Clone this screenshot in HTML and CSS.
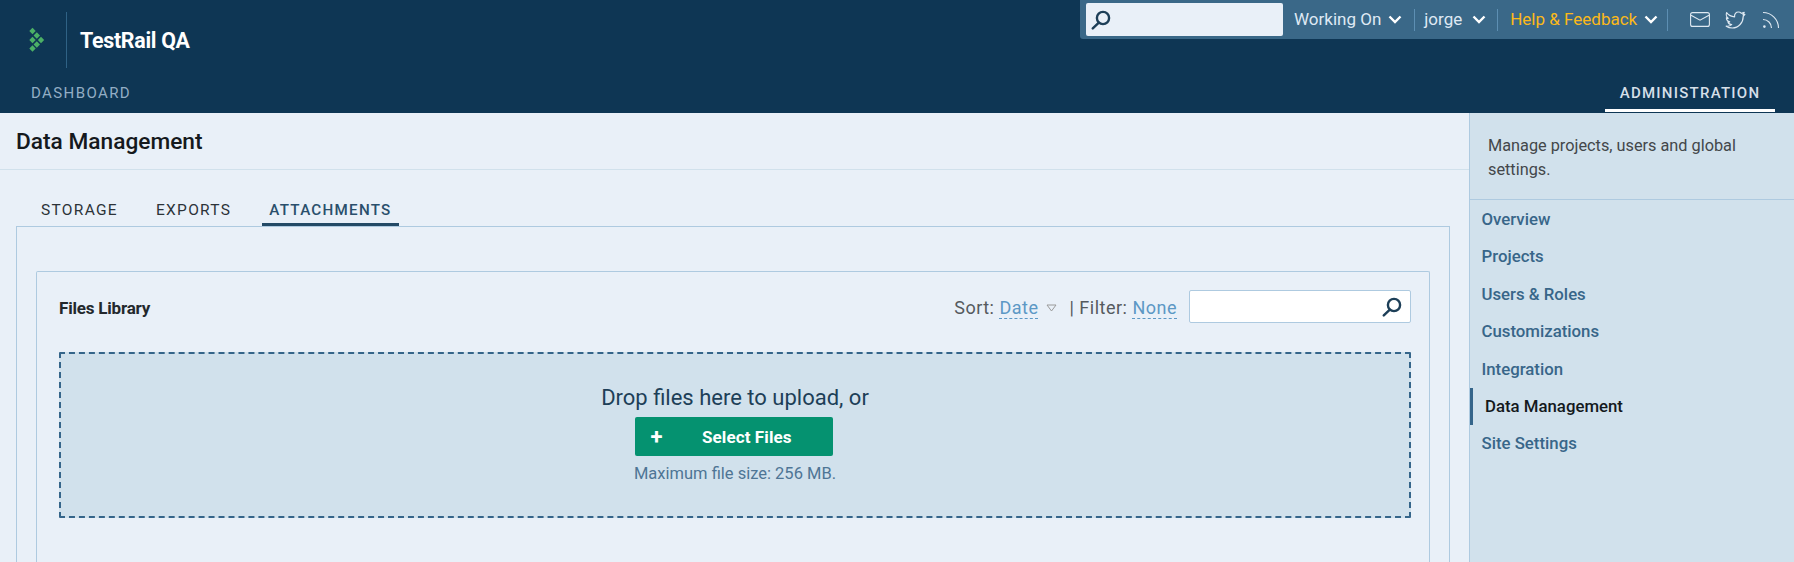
FILE: index.html
```html
<!DOCTYPE html>
<html lang="en">
<head>
<meta charset="utf-8">
<title>Data Management - TestRail QA</title>
<link rel="stylesheet" href="styles.css">
</head>
<body>
<header class="header">
  <div class="header-top">
    <div class="brand">
      <svg class="logo" width="17" height="26" viewBox="0 0 17 26">
        <g fill="#4cb066">
          <path d="M4.500 .8l3.200 3.200-3.200 3.200-3.200-3.200z"/>
          <path d="M8.800 5.300l3.200 3.200-3.200 3.200-3.200-3.200z"/>
          <path d="M4.500 9.800l3.200 3.200-3.200 3.200-3.200-3.200z"/>
          <path d="M13 9.800l3.200 3.200-3.200 3.200-3.200-3.200z"/>
          <path d="M8.800 14.300l3.200 3.200-3.200 3.200-3.200-3.200z"/>
          <path d="M4.500 18.300l3.200 3.200-3.200 3.200-3.200-3.200z"/>
        </g>
      </svg>
      <div class="brand-sep"></div>
      <div class="brand-name">TestRail QA</div>
    </div>
    <div class="topbar">
      <div class="top-search">
        <svg width="20" height="20" viewBox="0 0 20 20" fill="none" stroke="#1d3f58" stroke-width="2.4"><circle cx="12" cy="8" r="6.1"/><path d="M7.8 12.600L1.800 18.400" stroke-linecap="round"/></svg>
      </div>
      <div class="top-item working">Working On <svg class="chev" width="14" height="9" viewBox="0 0 14 9" fill="none" stroke="#fff" stroke-width="2.4"><path d="M1.5 1.5L7 7l5.5-5.5"/></svg></div>
      <div class="top-sep"></div>
      <div class="top-item user">jorge <svg class="chev" width="14" height="9" viewBox="0 0 14 9" fill="none" stroke="#fff" stroke-width="2.4"><path d="M1.5 1.5L7 7l5.5-5.5"/></svg></div>
      <div class="top-sep"></div>
      <div class="top-item help">Help &amp; Feedback <svg class="chev" width="14" height="9" viewBox="0 0 14 9" fill="none" stroke="#fff" stroke-width="2.4"><path d="M1.5 1.5L7 7l5.5-5.5"/></svg></div>
      <div class="top-sep"></div>
      <div class="top-icons">
        <svg class="ic-mail" width="20" height="15" viewBox="0 0 20 15" fill="none" stroke="#dfe9f2" stroke-width="1.1"><rect x=".6" y=".6" width="18.8" height="13.8" rx="2"/><path d="M1 3.2l9 5 9-5"/></svg>
        <svg class="ic-tw" width="21" height="18" viewBox="0 0 21 18" fill="none" stroke="#dfe9f2" stroke-width="1.2" stroke-linejoin="round"><path d="M1.6 1.6c2 2.6 4.700 4 8 4.200C9.200 2.800 11 1 13.400 1c1.300 0 2.300.6 3 1.300l2.800-.9-1.300 2.400 2-.4-1.700 2c0 6.200-4.600 11.600-10.800 11.600-2.300 0-4.400-.6-6.200-1.800 2 .2 4-.4 5.500-1.600-1.800 0-3.300-1.200-3.800-2.800h1.800C2.800 10.300 1.400 8.700 1.400 6.800c.5.300 1.100.5 1.800.5C1.500 6.200.9 3.500 1.600 1.600z"/></svg>
        <svg class="ic-rss" width="18" height="18" viewBox="0 0 18 18" fill="none" stroke="#dfe9f2" stroke-width="1.1"><circle cx="2.400" cy="15.600" r="1.300" fill="#dfe9f2" stroke="none"/><path d="M1 8.500c4.700 0 8.500 3.800 8.500 8.500"/><path d="M1 1.500c8.600 0 15.500 6.900 15.500 15.500"/></svg>
      </div>
    </div>
  </div>
  <nav class="main-nav">
    <a class="nav-link">DASHBOARD</a>
    <a class="nav-link active">ADMINISTRATION</a>
  </nav>
</header>
<div class="page">
  <main class="content">
    <h1 class="title">Data Management</h1>
    <div class="tabs">
      <a class="tab">STORAGE</a>
      <a class="tab">EXPORTS</a>
      <a class="tab current">ATTACHMENTS</a>
    </div>
    <section class="tab-box">
      <div class="card">
        <div class="card-head">
          <div class="card-title">Files Library</div>
          <div class="controls">
            <span class="ctl">Sort: <a class="dotted">Date</a></span>
            <svg class="tri" width="11" height="8" viewBox="0 0 11 8" fill="none" stroke="#9a9a9a"><path d="M1 1h9L5.500 7z"/></svg>
            <span class="ctl bar">| Filter: <a class="dotted">None</a></span>
            <div class="lib-search">
              <svg width="20" height="20" viewBox="0 0 20 20" fill="none" stroke="#1d3f58" stroke-width="2.400"><circle cx="12" cy="8" r="6.100"/><path d="M7.800 12.600L1.800 18.400" stroke-linecap="round"/></svg>
            </div>
          </div>
        </div>
        <div class="dropzone">
          <div class="drop-text">Drop files here to upload, or</div>
          <button class="select-btn"><span class="plus">+</span><span class="select-label">Select Files</span></button>
          <div class="max-size">Maximum file size: 256 MB.</div>
        </div>
      </div>
    </section>
  </main>
  <aside class="sidebar">
    <p class="side-intro">Manage projects, users and global settings.</p>
    <ul class="side-list">
      <li class="side-item">Overview</li>
      <li class="side-item">Projects</li>
      <li class="side-item">Users &amp; Roles</li>
      <li class="side-item">Customizations</li>
      <li class="side-item">Integration</li>
      <li class="side-item selected">Data Management</li>
      <li class="side-item">Site Settings</li>
    </ul>
  </aside>
</div>
</body>
</html>
```

FILE: styles.css
```css
* { box-sizing: border-box; }
html, body { margin: 0; height: 100%; }
body {
  font-family: Roboto, "Liberation Sans", sans-serif;
  background: #e9f0f8;
  overflow: hidden;
  display: flex;
  flex-direction: column;
}
.header { background: #0e3654; height: 113px; flex: none; display: flex; flex-direction: column; }
.header-top { display: flex; justify-content: space-between; align-items: flex-start; height: 79px; }
.brand { display: flex; align-items: center; padding: 12px 0 0 28px; }
.logo { display: block; margin-right: 21px; }
.brand-sep { width: 1px; height: 56px; background: #2f6285; }
.brand-name { margin-left: 13px; color: #fff; font-size: 21.4px; font-weight: 700; letter-spacing: -0.3px; }
.topbar {
  display: flex; align-items: center; width: 714px; height: 39px; padding: 0 0 0 6px;
  background: #3a6888; border-bottom-left-radius: 3px; color: #dfe9f4; font-size: 17px;
}
.top-search { width: 197px; height: 33px; background: #e9f0f8; border-radius: 2px; padding: 7px 0 0 5px; flex: none; }
.top-search svg { display: block; }
.top-item { display: flex; align-items: center; white-space: nowrap; padding-bottom: 1px; }
.chev { margin-left: 7px; }
.working { margin: 0 12px 0 11px; }
.user { margin: 0 11px 0 9px; }
.user .chev { margin-left: 10px; }
.help { margin: 0 9px 0 12px; color: #fbb919; }
.top-sep { width: 1px; height: 22px; background: #5d8fb3; flex: none; }
.top-icons { display: flex; align-items: center; margin-left: 22px; }
.top-icons svg { display: block; }
.ic-tw { margin-left: 15px; }
.ic-rss { margin-left: 16px; }
.main-nav { display: flex; justify-content: space-between; flex: 1; }
.nav-link { font-size: 15px; letter-spacing: 1.4px; color: #93aec5; padding: 5px 0 0 31px; }
.nav-link.active {
  color: #d5dfe8; font-weight: 500; width: 170px; margin-right: 19px; padding: 5px 0 0; text-align: center;
  border-bottom: 3px solid #fff; height: 33px; letter-spacing: 1.25px;
}
.page { flex: 1; display: flex; min-height: 0; overflow: hidden; }
.content { flex: 1; min-width: 0; display: flex; flex-direction: column; }
.title {
  margin: 0; height: 57px; padding: 15px 16px 0; font-size: 22.7px; line-height: 28px; font-weight: 500; color: #15191d;
  border-bottom: 1px solid #d1e1ec; flex: none;
}
.tabs { display: flex; padding: 28px 0 0 41px; height: 56px; flex: none; }
.tab { font-size: 15.5px; letter-spacing: 1.3px; color: #2c3338; margin-right: 38px; line-height: 25px; }
.tab.current {
  color: #2a4f6c; font-weight: 500; height: 28px; margin-left: -7px; padding: 0 7px; font-size: 15.2px; letter-spacing: 1.25px;
  border-bottom: 3px solid #244a66;
}
.tab-box { flex: 1; min-height: 0; margin: 0 19px 0 16px; border: 1px solid #aecae0; border-bottom: 0; padding: 44px 19px 0; display: flex; flex-direction: column; }
.card { flex: 1; min-height: 0; border: 1px solid #aecae0; border-bottom: 0; border-top-left-radius: 2px; border-top-right-radius: 2px; padding: 0 18px 0 22px; }
.card-head { display: flex; justify-content: space-between; align-items: center; height: 80px; padding-bottom: 11px; }
.card-title { font-size: 17px; font-weight: 700; color: #23282c; letter-spacing: -0.2px; margin-top: 3px; }
.controls { display: flex; align-items: center; color: #555a5e; font-size: 18px; }
.ctl { white-space: nowrap; margin-top: 2px; letter-spacing: 0.5px; }
.dotted { color: #5c98c5; border-bottom: 1px dashed #5c98c5; }
.tri { margin: 3px 12px 0 8px; }
.bar { margin-right: 12px; }
.lib-search {
  width: 222px; height: 33px; background: #fff; border: 1px solid #aecae0; border-radius: 2px;
  display: flex; justify-content: flex-end; align-items: center; padding-right: 8px;
}
.dropzone {
  height: 166px; background: #d1e1ec; border: 2px dashed #35658a; border-radius: 1px;
  display: flex; flex-direction: column; align-items: center; padding-top: 30px;
}
.drop-text { font-size: 22px; line-height: 28px; color: #1d3f58; font-weight: 400; }
.select-btn {
  width: 198px; height: 39px; margin: 5px 2px 0 0; background: #059270; border: 0; border-radius: 2px; color: #fff;
  display: flex; align-items: center; font-family: inherit; padding: 0 0 0 13px;
}
.plus { font-size: 22px; font-weight: 700; width: 17px; line-height: 1; }
.select-label { font-size: 17px; font-weight: 700; margin-left: 37px; letter-spacing: 0.1px; }
.max-size { margin-top: 8px; font-size: 16.5px; color: #4e7595; }
.sidebar { width: 325px; flex: none; background: #d1e1ec; border-left: 1px solid #aecae0; }
.side-intro {
  margin: 0; height: 87px; padding: 21px 17px 0 18px; font-size: 16.3px; line-height: 24px; color: #43474a;
  border-bottom: 1px solid #aecae0;
}
.side-list { list-style: none; margin: 0; padding: 1px 0 0; }
.side-item { height: 37.4px; line-height: 37.4px; padding-left: 11.5px; font-size: 16.8px; font-weight: 500; color: #386689; }
.selected { color: #14191d; border-left: 3px solid #35658a; padding-left: 12px; }
```
